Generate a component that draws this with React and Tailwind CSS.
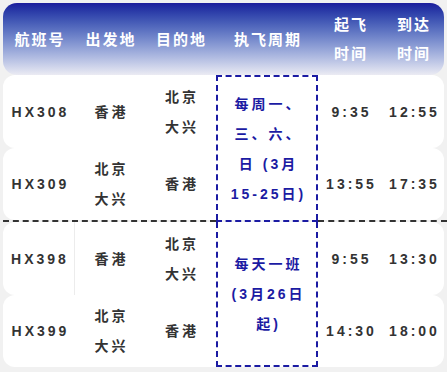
import React from 'react';

const groups = [
  {
    schedule: ['每周一、', '三、六、', '日 (3月', '15-25日)'],
    rows: [
      { no: 'HX308', from: ['香港'], to: ['北京', '大兴'], dep: '9:35', arr: '12:55' },
      { no: 'HX309', from: ['北京', '大兴'], to: ['香港'], dep: '13:55', arr: '17:35' },
    ],
  },
  {
    schedule: ['每天一班', '(3月26日', '起)'],
    rows: [
      { no: 'HX398', from: ['香港'], to: ['北京', '大兴'], dep: '9:55', arr: '13:30' },
      { no: 'HX399', from: ['北京', '大兴'], to: ['香港'], dep: '14:30', arr: '18:00' },
    ],
  },
];

const Lines = ({ items }) => (
  <div className="flex flex-col items-center">
    {items.map((t) => (
      <span key={t}>{t}</span>
    ))}
  </div>
);

const Group = ({ group, first }) => (
  <div className="grid grid-cols-[72px_70px_71px_102px_64px_62px] grid-rows-[73px_72px] text-[14px] font-bold tracking-[3px] leading-[30px] text-[#333]">
    {group.rows.map((r, i) => (
      <React.Fragment key={r.no}>
        <div
          className={`bg-white rounded-l-[12px] flex items-center justify-center pl-[3px] ${
            !first && i === 0 ? 'border-r border-[#ececec]' : ''
          }`}
        >
          {r.no}
        </div>
        <div className="bg-white flex items-center justify-center pl-[3px]">
          <Lines items={r.from} />
        </div>
        <div className="bg-white flex items-center justify-center pl-[3px]">
          <Lines items={r.to} />
        </div>
        {i === 0 && (
          <div
            className={`row-span-2 bg-white border-dashed border-[#1b1ba3] text-[#1b1ba3] flex items-center justify-center pl-[3px] ${
              first ? 'border-2 border-b-0' : 'border-x-2 border-b-2'
            }`}
          >
            <Lines items={group.schedule} />
          </div>
        )}
        <div className="bg-white flex items-center justify-center pl-[3px]">{r.dep}</div>
        <div className="bg-white rounded-r-[12px] flex items-center justify-center pl-[3px]">{r.arr}</div>
      </React.Fragment>
    ))}
  </div>
);

export default function App() {
  return (
    <div
      className="w-[447px] h-[372px] bg-[#f1f1f1] p-[3px] overflow-hidden"
      style={{ fontFamily: '"Liberation Sans", "Noto Sans CJK SC", sans-serif' }}
    >
      <div className="h-[72px] rounded-[14px] bg-gradient-to-b from-[#1c1c9c] to-[#ebebf3] grid grid-cols-[72px_70px_71px_102px_64px_62px] text-white font-bold text-[15px] tracking-[2px] leading-[29px]">
        <div className="flex items-center justify-center pl-[2px]">航班号</div>
        <div className="flex items-center justify-center pl-[2px]">出发地</div>
        <div className="flex items-center justify-center pl-[2px]">目的地</div>
        <div className="flex items-center justify-center pl-[2px]">执飞周期</div>
        <div className="flex flex-col items-center justify-center pl-[2px]">
          <span>起飞</span>
          <span>时间</span>
        </div>
        <div className="flex flex-col items-center justify-center pl-[2px]">
          <span>到达</span>
          <span>时间</span>
        </div>
      </div>
      <Group group={groups[0]} first />
      <div className="flex h-[2px]">
        <div className="w-[213px] border-t-2 border-dashed border-[#333]" />
        <div className="w-[102px] border-t-2 border-dashed border-[#1b1ba3]" />
        <div className="flex-1 -mr-[3px] border-t-2 border-dashed border-[#333]" />
      </div>
      <Group group={groups[1]} />
    </div>
  );
}
